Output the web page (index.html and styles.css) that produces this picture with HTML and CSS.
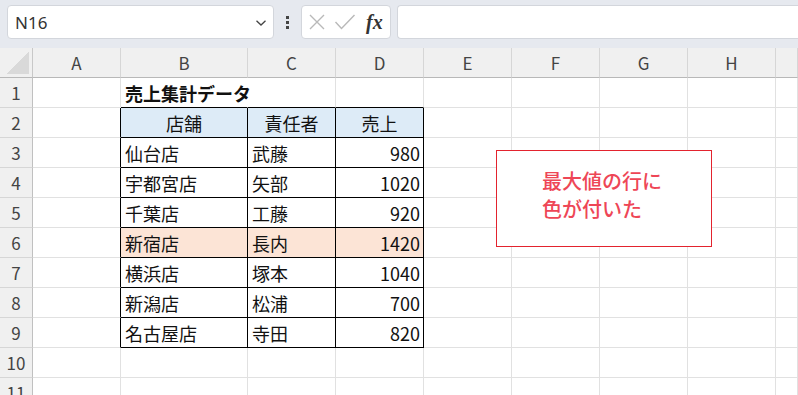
FILE: index.html
```html
<!DOCTYPE html>
<html lang="ja">
<head>
<meta charset="utf-8">
<link rel="stylesheet" href="styles.css">
</head>
<body>
<div class="toolbar">
  <div class="namebox">
    <span class="name">N16</span>
    <svg class="chev" width="12" height="8" viewBox="0 0 12 8"><path d="M1.5 1.8 L6 6 L10.5 1.8" fill="none" stroke="#444" stroke-width="1.3"/></svg>
  </div>
  <div class="dots"><span></span><span></span><span></span></div>
  <div class="fxbox">
    <svg width="18" height="18" viewBox="0 0 18 18"><path d="M2 2 L16 16 M16 2 L2 16" stroke="#b9b9b9" stroke-width="1.4" fill="none"/></svg>
    <svg width="22" height="18" viewBox="0 0 22 18"><path d="M1.5 9 L7.5 15.5 L20.5 2" stroke="#b9b9b9" stroke-width="1.4" fill="none"/></svg>
    <span class="fx">fx</span>
  </div>
  <div class="formula"></div>
</div>

<div class="sheet">
  <div class="corner"></div>
  <div class="ch">A</div><div class="ch">B</div><div class="ch">C</div><div class="ch">D</div><div class="ch">E</div><div class="ch">F</div><div class="ch">G</div><div class="ch">H</div><div class="ch"></div>

  <div class="rh">1</div>
  <div class="c"></div><div class="c title tb-top">売上集計データ</div><div class="c tb-top"></div><div class="c tb-top"></div><div class="c"></div><div class="c"></div><div class="c"></div><div class="c"></div><div class="c"></div>

  <div class="rh">2</div>
  <div class="c tb-left"></div><div class="c t head">店舗</div><div class="c t head">責任者</div><div class="c t head">売上</div><div class="c"></div><div class="c"></div><div class="c"></div><div class="c"></div><div class="c"></div>

  <div class="rh">3</div>
  <div class="c tb-left"></div><div class="c t">仙台店</div><div class="c t">武藤</div><div class="c t num">980</div><div class="c"></div><div class="c"></div><div class="c"></div><div class="c"></div><div class="c"></div>

  <div class="rh">4</div>
  <div class="c tb-left"></div><div class="c t">宇都宮店</div><div class="c t">矢部</div><div class="c t num">1020</div><div class="c"></div><div class="c"></div><div class="c"></div><div class="c"></div><div class="c"></div>

  <div class="rh">5</div>
  <div class="c tb-left"></div><div class="c t">千葉店</div><div class="c t">工藤</div><div class="c t num">920</div><div class="c"></div><div class="c"></div><div class="c"></div><div class="c"></div><div class="c"></div>

  <div class="rh">6</div>
  <div class="c tb-left"></div><div class="c t hi">新宿店</div><div class="c t hi">長内</div><div class="c t num hi">1420</div><div class="c"></div><div class="c"></div><div class="c"></div><div class="c"></div><div class="c"></div>

  <div class="rh">7</div>
  <div class="c tb-left"></div><div class="c t">横浜店</div><div class="c t">塚本</div><div class="c t num">1040</div><div class="c"></div><div class="c"></div><div class="c"></div><div class="c"></div><div class="c"></div>

  <div class="rh">8</div>
  <div class="c tb-left"></div><div class="c t">新潟店</div><div class="c t">松浦</div><div class="c t num">700</div><div class="c"></div><div class="c"></div><div class="c"></div><div class="c"></div><div class="c"></div>

  <div class="rh">9</div>
  <div class="c tb-left"></div><div class="c t">名古屋店</div><div class="c t">寺田</div><div class="c t num">820</div><div class="c"></div><div class="c"></div><div class="c"></div><div class="c"></div><div class="c"></div>

  <div class="rh">10</div>
  <div class="c"></div><div class="c"></div><div class="c"></div><div class="c"></div><div class="c"></div><div class="c"></div><div class="c"></div><div class="c"></div><div class="c"></div>

  <div class="rh">11</div>
  <div class="c"></div><div class="c"></div><div class="c"></div><div class="c"></div><div class="c"></div><div class="c"></div><div class="c"></div><div class="c"></div><div class="c"></div>

  <div class="note">最大値の行に<br>色が付いた</div>
</div>
</body>
</html>
```

FILE: styles.css
```css
html, body {
  margin: 0;
  padding: 0;
  width: 798px;
  height: 395px;
  overflow: hidden;
  background: #fff;
  font-family: "Noto Sans CJK JP", "Noto Sans", sans-serif;
}

.toolbar {
  height: 48px;
  box-sizing: border-box;
  background: #e6e9ef;
  display: flex;
  align-items: flex-start;
  padding: 5px 0 0 7px;
}

.namebox {
  width: 267px;
  height: 34px;
  box-sizing: border-box;
  background: #fff;
  border: 1px solid #d3d6dc;
  border-radius: 4px;
  display: flex;
  align-items: center;
  justify-content: space-between;
  padding: 0 6px 0 7px;
  flex: none;
}

.name {
  font-family: "Noto Sans", "Liberation Sans", sans-serif;
  font-size: 17px;
  color: #333;
}

.chev { margin-top: 2px; }

.dots {
  width: 27px;
  height: 34px;
  display: flex;
  flex-direction: column;
  align-items: center;
  justify-content: center;
  gap: 2px;
  flex: none;
}

.dots span {
  width: 3px;
  height: 3px;
  background: #444;
}

.fxbox {
  width: 90px;
  height: 34px;
  box-sizing: border-box;
  background: #fff;
  border: 1px solid #d3d6dc;
  border-radius: 4px;
  display: flex;
  align-items: center;
  gap: 8px;
  padding: 0 0 0 6px;
  flex: none;
}

.fx {
  font-family: "Liberation Serif", "DejaVu Serif", serif;
  font-style: italic;
  font-weight: bold;
  font-size: 20px;
  color: #333;
  margin-left: 2px;
}

.formula {
  margin-left: 6px;
  height: 34px;
  flex: 1;
  box-sizing: border-box;
  background: #fff;
  border: 1px solid #d3d6dc;
  border-right: none;
  border-radius: 4px 0 0 4px;
}

.sheet {
  position: relative;
  display: grid;
  grid-template-columns: 33px 88px 127px 88px 88px 88px 88px 88px 88px 22px;
  grid-auto-rows: 30px;
}

.sheet > div {
  box-sizing: border-box;
}

.corner {
  background: #f0f0f0;
  border-right: 1px solid #c8c8c8;
  border-bottom: 1px solid #b8b8b8;
  position: relative;
}

.corner::after {
  content: "";
  position: absolute;
  right: 3px;
  bottom: 3px;
  width: 22px;
  height: 22px;
  background: linear-gradient(to bottom right, transparent 50%, #d9d9d9 50%);
}

.ch {
  background: #f0f0f0;
  border-right: 1px solid #d6d6d6;
  border-bottom: 1px solid #b8b8b8;
  display: flex;
  align-items: center;
  justify-content: center;
  font-size: 17px;
  color: #444;
}

.rh {
  background: #f0f0f0;
  border-right: 1px solid #c0c0c0;
  border-bottom: 1px solid #d6d6d6;
  display: flex;
  align-items: center;
  justify-content: center;
  font-size: 17px;
  color: #444;
}

.c {
  border-right: 1px solid #e1e1e1;
  border-bottom: 1px solid #e1e1e1;
  display: flex;
  align-items: center;
  font-size: 18px;
  color: #111;
  white-space: nowrap;
}

.title {
  font-weight: bold;
  padding-left: 4px;
  overflow: visible;
  border-right-color: #fff;
}

.tb-top { border-bottom-color: #000; }
.tb-left { border-right-color: #000; }

.t {
  border-right-color: #000;
  border-bottom-color: #000;
  padding-left: 4px;
}

.head {
  background: #ddebf7;
  justify-content: center;
  padding-left: 0;
}

.num {
  justify-content: flex-end;
  padding-left: 0;
  padding-right: 3px;
}

.hi { background: #fce4d6; }

.note {
  position: absolute;
  left: 496px;
  top: 102px;
  width: 216px;
  height: 97px;
  box-sizing: border-box;
  border: 1px solid #e3232e;
  background: #fff;
  padding: 16px 0 0 45px;
  font-size: 20px;
  line-height: 28px;
  font-weight: 500;
  color: #ee4656;
}
```
